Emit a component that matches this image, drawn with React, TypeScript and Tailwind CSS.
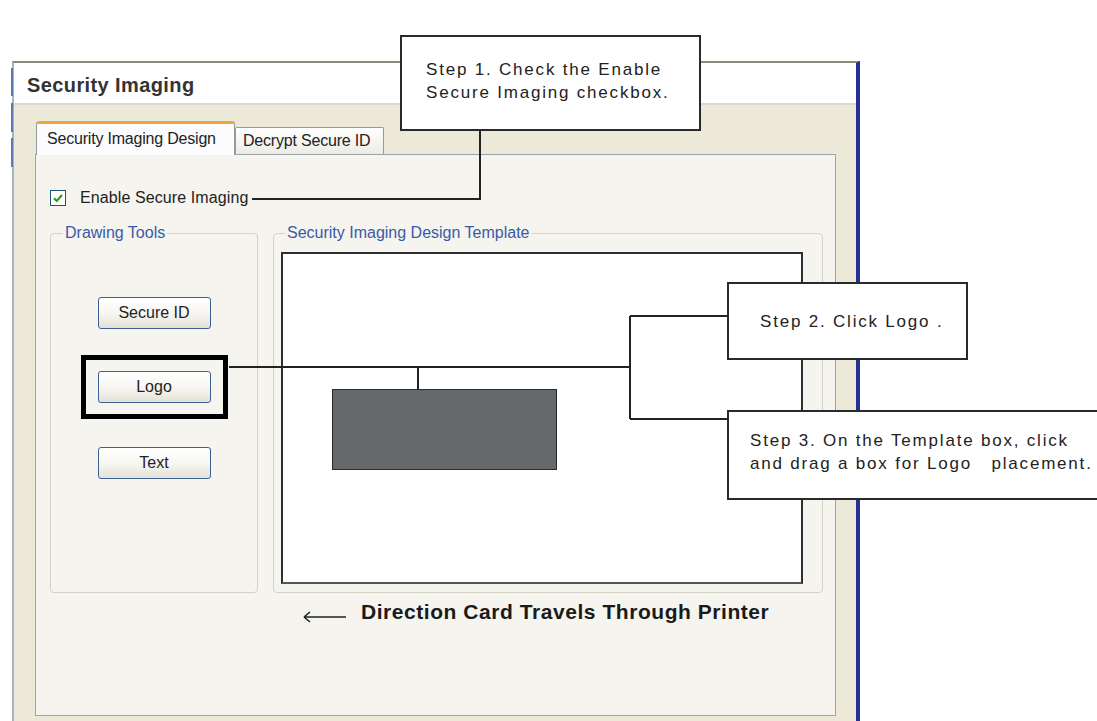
const btn =
  "flex h-[32px] w-[113px] items-center justify-center rounded-[3px] border border-[#3d5f94] bg-gradient-to-b from-white via-[#f7f6f2] to-[#e4e2d6] text-[16px] text-[#222]";

function Checkbox() {
  return (
    <span className="flex h-[16px] w-[16px] items-center justify-center border border-[#1c5180] bg-white">
      <svg width="12" height="12" viewBox="0 0 12 12">
        <path d="M2 6.2 L4.8 9 L10 3" fill="none" stroke="#22a022" strokeWidth="2.2" />
      </svg>
    </span>
  );
}

function Callout({ className, children }: { className: string; children: React.ReactNode }) {
  return (
    <div
      className={
        "absolute border-2 border-[#2a2a2a] bg-white text-[17px] leading-[23px] tracking-[1.8px] text-[#222] whitespace-pre " +
        className
      }
    >
      {children}
    </div>
  );
}

export default function App() {
  return (
    <div className="relative h-[721px] w-[1097px] overflow-hidden bg-white font-['Liberation_Sans',Arial,sans-serif] text-[#222]">
      {/* window */}
      <div className="ml-[12px] mt-[61px] flex h-[660px] w-[848px] flex-col border-t-2 border-l-2 border-r-4 border-t-[#8a8a7c] border-l-[#a9b3bd] border-r-[#262f94]">
        <div className="flex h-[42px] items-center border-b-2 border-[#dcdad0] bg-white pl-[13px] pt-[4px]">
          <span className="text-[20px] font-bold tracking-[0.4px] text-[#333]">Security Imaging</span>
        </div>

        <div className="flex flex-1 flex-col bg-[#ece9d8] pl-[21px] pr-[20px] pt-[16px] pb-[5px]">
          {/* tabs */}
          <div className="relative z-10 -mb-px flex h-[34px] items-end pl-px">
            <div className="flex h-[34px] w-[199px] items-center rounded-t-[3px] border border-b-0 border-[#919b9c] border-t-[3px] border-t-[#f2a53a] bg-[#fcfcfe] pl-[10px] pb-[2px] text-[16px] tracking-[-0.2px]">
              Security Imaging Design
            </div>
            <div className="mb-px flex h-[27px] w-[149px] items-center rounded-t-[2px] border border-b-0 border-[#919b9c] bg-gradient-to-b from-white to-[#ecebe5] pl-[7px] text-[16px] tracking-[-0.2px]">
              Decrypt Secure ID
            </div>
          </div>

          {/* panel */}
          <div className="flex flex-1 flex-col border border-[#9aa4ab] bg-[#f5f4ef] pl-[14px]">
            <div className="mt-[35px] flex h-[16px] items-center gap-[14px]">
              <Checkbox />
              <span className="text-[16px] tracking-[0.1px]">Enable Secure Imaging</span>
            </div>

            <div className="mt-[18px] flex gap-[15px]">
              <fieldset className="flex h-[369px] w-[208px] flex-col items-center rounded-[4px] border border-[#d3d2c2]">
                <legend className="ml-[12px] px-[2px] text-[16px] leading-[18px] text-[#3a5aa8]">Drawing Tools</legend>
                <div className={btn + " mt-[55px]"}>Secure ID</div>
                <div className="mt-[26px] border-[5px] border-black px-[12px] py-[11px]">
                  <div className={btn}>Logo</div>
                </div>
                <div className={btn + " mt-[28px]"}>Text</div>
              </fieldset>

              <fieldset className="h-[369px] w-[550px] rounded-[4px] border border-[#d3d2c2]">
                <legend className="ml-[11px] px-[2px] text-[16px] leading-[18px] text-[#3a5aa8]">
                  Security Imaging Design Template
                </legend>
                <div className="ml-[7px] mt-[10px] h-[332px] w-[522px] border-2 border-[#2e2e2e] border-b-[#555] bg-white">
                  <div className="ml-[49px] mt-[135px] h-[81px] w-[225px] border border-[#2a2a2a] bg-[#65696c]" />
                </div>
              </fieldset>
            </div>

            <div className="ml-[253px] mt-[3px] flex items-center gap-[15px]">
              <svg width="43" height="14" viewBox="0 0 43 14" className="mt-[10px]">
                <path d="M1 7 H43 M1 7 L7 2 M1 7 L7 12" fill="none" stroke="#222" strokeWidth="1.6" />
              </svg>
              <span className="text-[21px] font-bold tracking-[0.55px] text-[#1a1a1a]">
                Direction Card Travels Through Printer
              </span>
            </div>
          </div>
        </div>
      </div>

      {/* window left edge accents */}
      <span className="absolute left-[11px] top-[68px] h-[28px] w-[2px] bg-[#5a7bb0]" />
      <span className="absolute left-[11px] top-[103px] h-[29px] w-[2px] bg-[#5a7bb0]" />
      <span className="absolute left-[11px] top-[138px] h-[29px] w-[2px] bg-[#5a7bb0]" />

      {/* connector lines */}
      <svg className="pointer-events-none absolute left-0 top-0" width="1097" height="721">
        <g fill="none" stroke="#222" strokeWidth="2">
          <path d="M480 130 V199 H252" />
          <path d="M229 367 H630" />
          <path d="M418 367 V390" />
          <path d="M630 316 V419 M630 316 H728 M630 419 H728" />
        </g>
      </svg>

      <Callout className="left-[400px] top-[35px] h-[96px] w-[301px] pl-[24px] pt-[21px]">
        {"Step 1. Check the Enable\nSecure Imaging checkbox."}
      </Callout>
      <Callout className="left-[727px] top-[282px] flex h-[78px] w-[241px] items-center pl-[31px]">
        Step 2. Click Logo .
      </Callout>
      <Callout className="left-[727px] top-[410px] h-[90px] w-[390px] pl-[21px] pt-[17px]">
        {"Step 3. On the Template box, click\nand drag a box for Logo   placement."}
      </Callout>
    </div>
  );
}
